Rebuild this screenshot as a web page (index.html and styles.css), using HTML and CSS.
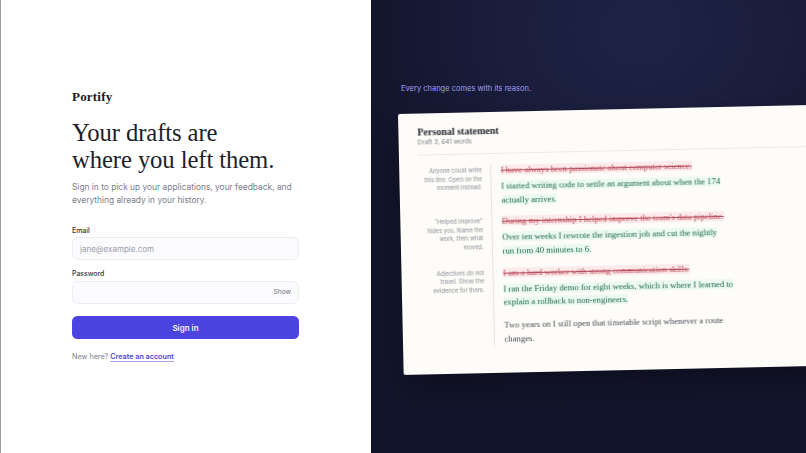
FILE: index.html
```html
<!DOCTYPE html>
<html lang="en">
<head>
<meta charset="utf-8">
<title>Portify</title>
<link rel="stylesheet" href="styles.css">
</head>
<body>
<main class="page">
  <section class="auth">
    <div class="auth-inner">
      <div class="logo">Portify</div>
      <h1 class="headline">Your drafts are<br>where you left them.</h1>
      <p class="lede">Sign in to pick up your applications, your feedback, and everything already in your history.</p>
      <form class="form">
        <div class="field">
          <div class="label">Email</div>
          <div class="input"><span class="placeholder">jane@example.com</span></div>
        </div>
        <div class="field">
          <div class="label">Password</div>
          <div class="input input-pw"><span class="show">Show</span></div>
        </div>
        <div class="submit">Sign in</div>
      </form>
      <p class="signup">New here? <a class="signup-link" href="#">Create an account</a></p>
    </div>
  </section>
  <section class="showcase">
    <p class="tagline">Every change comes with its reason.</p>
    <article class="doc">
      <header class="doc-head">
        <h2 class="doc-title">Personal statement</h2>
        <p class="doc-meta">Draft 3, 641 words</p>
      </header>
      <div class="doc-body">
        <div class="row">
          <p class="note">Anyone could write this line. Open on the moment instead.</p>
          <div class="edit">
            <p class="line"><del class="del">I have always been passionate about computer science.</del></p>
            <p class="line"><ins class="ins">I started writing code to settle an argument about when the 174 actually arrives.</ins></p>
          </div>
        </div>
        <div class="row">
          <p class="note">"Helped improve" hides you. Name the work, then what moved.</p>
          <div class="edit">
            <p class="line"><del class="del">During my internship I helped improve the team's data pipeline.</del></p>
            <p class="line"><ins class="ins">Over ten weeks I rewrote the ingestion job and cut the nightly<br>run from 40 minutes to 6.</ins></p>
          </div>
        </div>
        <div class="row">
          <p class="note">Adjectives do not travel. Show the evidence for them.</p>
          <div class="edit">
            <p class="line"><del class="del">I am a hard worker with strong communication skills.</del></p>
            <p class="line"><ins class="ins">I ran the Friday demo for eight weeks, which is where I learned to explain a rollback to non-engineers.</ins></p>
          </div>
        </div>
        <div class="row">
          <p class="note"></p>
          <div class="edit edit-last">
            <p class="line plain">Two years on I still open that timetable script whenever a route changes.</p>
          </div>
        </div>
      </div>
    </article>
  </section>
</main>
</body>
</html>
```
FILE: styles.css
```css
* { box-sizing: border-box; }
html, body { margin: 0; height: 100%; }
body { font-family: Inter, "Liberation Sans", sans-serif; background: #fff; overflow: hidden; }
p, h1, h2 { margin: 0; }
.page { display: flex; width: 806px; height: 453px; overflow: hidden; }
.auth {
  width: 371px; flex: none; background: #fff; border-left: 1px solid #9b9b9b;
  display: flex; align-items: center; padding: 0 0 3px 71px;
}
.auth-inner { width: 227px; }
.logo { font: 600 13px/18px "Liberation Serif", serif; color: #1b1c26; letter-spacing: .2px; }
.headline { margin-top: 14px; font: 400 24.7px/26.5px "Liberation Serif", serif; color: #1d1e2a; white-space: nowrap; letter-spacing: -.1px; }
.lede { margin-top: 7.5px; font-size: 8.4px; line-height: 13.4px; color: #7a7d8c; }
.form { margin-top: 18.5px; display: flex; flex-direction: column; }
.field { margin-bottom: 9px; }
.label { font-size: 6.9px; line-height: 9px; font-weight: 500; color: #333645; margin-bottom: 2.5px; }
.input {
  height: 23px; border: 1px solid #ecedf2; border-radius: 6px; background: #fbfbfd;
  display: flex; align-items: center; padding: 0 7px;
}
.placeholder { font-size: 8px; color: #9a9cab; }
.input-pw { justify-content: flex-end; }
.show { font-size: 6.7px; color: #70737f; }
.submit {
  margin-top: 3px; height: 23.5px; border-radius: 5.5px; background: #4d43e0; color: #f4f3ff;
  font-size: 8px; font-weight: 600; display: flex; align-items: center; justify-content: center;
}
.signup { margin-top: 12.5px; font-size: 7.2px; line-height: 10px; color: #7a7d8c; }
.signup-link { color: #4d43d0; font-weight: 600; text-decoration: none; border-bottom: 1px solid #a9a5ea; }
.showcase {
  flex: 1; position: relative; overflow: hidden;
  border-left: 1px solid #10101c;
  background: radial-gradient(ellipse 300px 240px at 62% 30px, #1f2346 0%, #191c39 55%, #12142b 100%);
  padding: 84px 0 0 29px;
}
.tagline { font-size: 7.5px; line-height: 10px; color: #a09ef0; }
.doc {
  position: absolute; left: 26px; top: 114px; width: 470px; height: 261px;
  background: #fdfcf8; border-radius: 2px; transform: rotate(-1.25deg); transform-origin: 0 0;
  will-change: transform;
  padding: 12px 0 0 19px; box-shadow: 0 12px 30px rgba(0, 0, 0, .3);
}
.doc-head { border-bottom: 1px solid #eceae3; height: 30px; }
.doc-title { font: 600 10px/13px "Liberation Serif", serif; color: #1d1e2a; }
.doc-meta { font-size: 6.3px; line-height: 9px; color: #7d7f8a; }
.doc-body { margin-top: 10px; }
.row { display: flex; }
.note { width: 63.5px; flex: none; padding: 2px 0 0 3.5px; font-size: 5.75px; line-height: 8.6px; color: #8b8d98; text-align: right; }
.edit { margin-left: 8px; border-left: 1px solid #e6e4dd; padding: 0 0 7.6px 10px; width: 243px; flex: none; }
.edit-last { padding-top: 1.2px; padding-bottom: 0; }
.line { font: 400 8.7px/13.8px "Liberation Serif", serif; color: #333645; }
.line + .line { margin-top: 2.3px; }
.del { color: #b84a5a; background: #fdeaeb; text-decoration: line-through; }
.ins { color: #1f6b4a; background: #ecf9f2; text-decoration: none; }
.plain { color: #4a4c57; }
```
